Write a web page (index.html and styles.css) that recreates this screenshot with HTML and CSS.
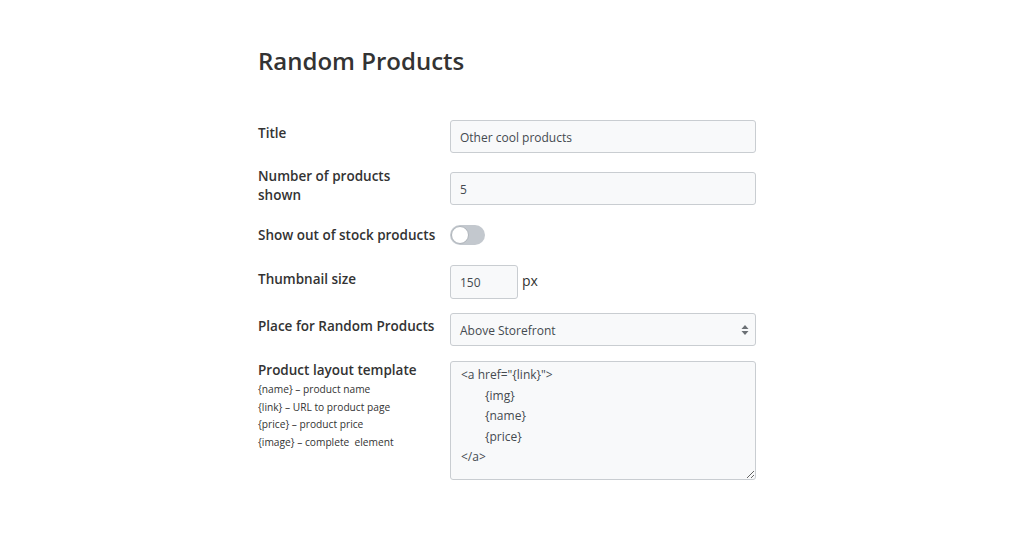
FILE: index.html
```html
<!DOCTYPE html>
<html>
<head>
<meta charset="utf-8">
<link rel="stylesheet" href="styles.css">
</head>
<body>
<div class="page">
  <h1 class="heading">Random Products</h1>
  <div class="form">
    <div class="row r-title">
      <div class="label">Title</div>
      <div class="field"><div class="input wide">Other cool products</div></div>
    </div>
    <div class="row r-number">
      <div class="label">Number of products<br>shown</div>
      <div class="field"><div class="input wide">5</div></div>
    </div>
    <div class="row r-toggle">
      <div class="label">Show out of stock products</div>
      <div class="field"><span class="toggle"><span class="knob"></span></span></div>
    </div>
    <div class="row r-thumb">
      <div class="label">Thumbnail size</div>
      <div class="field"><div class="input small">150</div><span class="unit">px</span></div>
    </div>
    <div class="row r-place">
      <div class="label">Place for Random Products</div>
      <div class="field">
        <div class="input wide select">Above Storefront
          <svg class="arrows" width="8" height="12" viewBox="0 0 8 12"><path d="M4 1 L7.5 5 H0.5 Z M4 11 L7.5 7 H0.5 Z" fill="#6b7075"/></svg>
        </div>
      </div>
    </div>
    <div class="row r-template">
      <div class="label">Product layout template
        <div class="hints">
          <div>{name} – product name</div>
          <div>{link} – URL to product page</div>
          <div>{price} – product price</div>
          <div>{image} – complete&nbsp; element</div>
        </div>
      </div>
      <div class="field"><textarea class="textarea">&lt;a href="{link}"&gt;
	{img}
	{name}
	{price}
&lt;/a&gt;</textarea></div>
    </div>
  </div>
</div>
</body>
</html>
```
FILE: styles.css
```css
html, body {
  margin: 0;
  padding: 0;
  background: #ffffff;
}
body {
  font-family: "Open Sans", "Noto Sans", sans-serif;
  color: #333333;
}
.page {
  padding: 46px 0 0 258px;
}
.heading {
  margin: 0;
  font-size: 24px;
  line-height: 30px;
  font-weight: 600;
  color: #333333;
}
.form {
  margin-top: 44px;
  width: 498px;
}
.row {
  display: flex;
  align-items: center;
}
.label {
  width: 192px;
  flex: none;
  font-size: 13.5px;
  line-height: 19px;
  font-weight: 600;
  margin-top: -6px;
}
.field {
  display: flex;
  align-items: center;
  flex: 1;
}
.input {
  box-sizing: border-box;
  height: 33px;
  border: 1px solid #c9cdd1;
  border-radius: 3px;
  background: #f8f9fa;
  padding: 0 9px;
  font-size: 12px;
  line-height: 33px;
  color: #444a50;
}
.wide { width: 306px; }
.small { width: 68px; height: 34px; line-height: 34px; }
.unit {
  margin-left: 4px;
  font-size: 14px;
  color: #333;
  margin-top: -4px;
}
.select {
  display: flex;
  justify-content: space-between;
  align-items: center;
  padding-right: 6px;
  padding-top: 1px;
  line-height: 31px;
}
.arrows { flex: none; margin-top: -1px; }
.r-number { margin-top: 19px; }
.r-toggle { margin-top: 20px; }
.r-toggle .label { margin-top: 0; }
.r-thumb { margin-top: 20px; }
.r-place { margin-top: 14px; }
.r-template { margin-top: 15px; align-items: flex-start; }
.r-template .label { margin-top: 0; }
.toggle {
  display: block;
  box-sizing: border-box;
  width: 35px;
  height: 20px;
  border-radius: 10px;
  background: #c3c8ce;
  padding: 1px;
}
.knob {
  display: block;
  box-sizing: border-box;
  width: 18px;
  height: 18px;
  border-radius: 50%;
  background: #fff;
  border: 1px solid #aeb4ba;
}
.hints {
  font-size: 10.2px;
  line-height: 17.7px;
  font-weight: 400;
  margin-top: 1px;
}
.textarea {
  box-sizing: border-box;
  width: 306px;
  height: 119px;
  border: 1px solid #c9cdd1;
  border-radius: 3px;
  background: #f8f9fa;
  padding: 3px 10px;
  margin: 0;
  font-family: "Open Sans", "Noto Sans", sans-serif;
  font-size: 12px;
  line-height: 20.5px;
  color: #444a50;
  tab-size: 24px;
  resize: vertical;
  display: block;
}
```
